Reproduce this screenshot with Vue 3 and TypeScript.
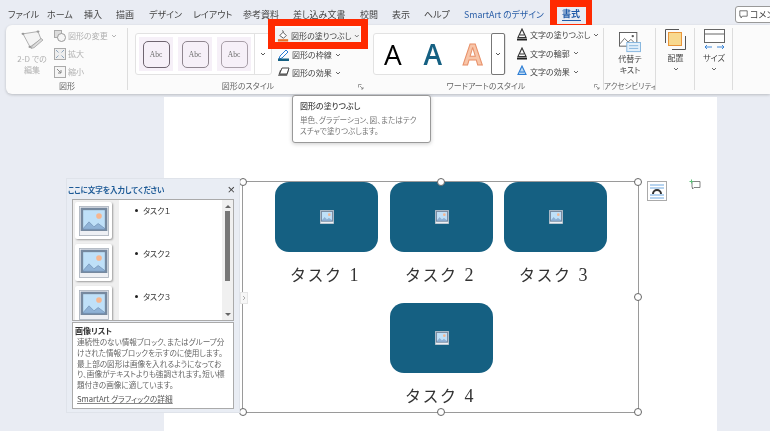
<script setup lang="ts">
const tabs = [
  { t: 'ファイル', w: 39 }, { t: 'ホーム', w: 37 }, { t: '挿入', w: 32 }, { t: '描画', w: 33 },
  { t: 'デザイン', w: 44 }, { t: 'レイアウト', w: 50 }, { t: '参考資料', w: 50 }, { t: '差し込み文書', w: 67 },
  { t: '校閲', w: 32 }, { t: '表示', w: 32 }, { t: 'ヘルプ', w: 40 }
]
const abc = ['#6f6570', '#8f868f', '#a89fa8']
const wordArt = [
  { c: 'wa-black' }, { c: 'wa-blue' }, { c: 'wa-orange' }
]
const fxText = ['文字の塗りつぶし', '文字の輪郭', '文字の効果']
const nodes = [
  { x: 32, y: 0, label: 'タスク', n: '1' },
  { x: 147, y: 0, label: 'タスク', n: '2' },
  { x: 261, y: 0, label: 'タスク', n: '3' },
  { x: 147, y: 121, label: 'タスク', n: '4' }
]
const handles = [
  [0, 0], [198, 0], [395, 0], [0, 115], [395, 115], [0, 230], [198, 230], [395, 230]
]
const paneItems = ['タスク１', 'タスク２', 'タスク３']
</script>

<template>
  <div class="screen">
    <svg class="defs" width="0" height="0">
      <symbol id="pic" viewBox="0 0 36 36">
        <rect x="0.5" y="0.5" width="35" height="35" fill="#eef0f4" stroke="#a9b2bd" />
        <rect x="3.5" y="3.5" width="29" height="25" fill="#bfe0f8" stroke="#76899f" stroke-width="3" />
        <circle cx="24" cy="12" r="3.4" fill="#f6b68f" />
        <path d="M5 27l7-8 6 6 5-4 8 6v1H5z" fill="#8fb2d6" stroke="#6f8fb3" stroke-width=".8" />
      </symbol>
      <symbol id="chev" viewBox="0 0 6 4">
        <path d="M1 1l2 2 2-2" fill="none" stroke="currentColor" stroke-width=".9" />
      </symbol>
    </svg>

    <header class="tabbar">
      <span v-for="tab in tabs" :key="tab.t" class="tab" :style="{ width: tab.w + 'px' }">{{ tab.t }}</span>
      <span class="tab tab-sa">SmartArt のデザイン</span>
      <span class="tab tab-fmt"><b>書式</b></span>
      <span class="comment">
        <svg width="9" height="9" viewBox="0 0 9 9"><path d="M.8.8h7.4v5.4H3.4L2 8V6.2H.8z" fill="none" stroke="#555" stroke-width=".8" /></svg>
        コメント
      </span>
    </header>

    <section class="ribbon">
      <div class="group g1">
        <div class="g-body g1-body">
          <div class="big disabled">
            <svg width="24" height="20" viewBox="0 0 24 26" preserveAspectRatio="none">
              <path d="M3 5l15-3 3 10-11 10z" fill="#f4f4f4" stroke="#a8a8a8" stroke-width="1" />
              <circle cx="3" cy="5" r="1.5" fill="#999" /><circle cx="18" cy="2" r="1.5" fill="#999" /><circle cx="10" cy="22" r="1.5" fill="#999" />
              <path d="M12 21l9-10 2 2-9 10-3 1z" fill="#ddd" stroke="#999" stroke-width=".8" />
            </svg>
            <span>2-D での<br />編集</span>
          </div>
          <div class="small-col disabled">
            <div class="row">
              <svg width="12" height="12" viewBox="0 0 12 12"><rect x=".5" y=".5" width="7" height="7" fill="#ddd" stroke="#aaa" /><circle cx="7.5" cy="7.5" r="4" fill="#f5f5f5" stroke="#999" /></svg>
              図形の変更 <svg class="chev" width="6" height="4"><use href="#chev" /></svg>
            </div>
            <div class="row">
              <svg width="12" height="12" viewBox="0 0 12 12"><rect x=".5" y=".5" width="11" height="11" fill="#eee" stroke="#aaa" /><path d="M2 2l2.5 2.5M10 2L7.5 4.500M2 10l2.500-2.500M10 10L7.500 7.500" stroke="#8ca5bd" /></svg>
              拡大
            </div>
            <div class="row">
              <svg width="12" height="12" viewBox="0 0 12 12"><rect x=".5" y=".5" width="11" height="11" fill="#f5f5f5" stroke="#aaa" /><path d="M3 3l4 4M7 4v3H4" fill="none" stroke="#888" /></svg>
              縮小
            </div>
          </div>
        </div>
        <div class="g-label">図形</div>
      </div>

      <div class="group g2">
        <div class="g-body g2-body">
          <div class="gallery gal-shape">
            <div v-for="c in abc" :key="c" class="abc-cell">
              <span class="abc" :style="{ borderColor: c }">Abc</span>
            </div>
            <div class="more"><span class="more-bar"></span><svg width="6" height="4"><use href="#chev" /></svg></div>
          </div>
          <div class="fmt-col">
            <div class="row fill-btn">
              <svg width="13" height="13" viewBox="0 0 13 13"><path d="M3 6.500l3.500-3.500 3.500 3.500-3 3z" fill="#fff" stroke="#444" stroke-width=".9" /><path d="M6 1l1 2" stroke="#444" /><rect x="1" y="10.500" width="11" height="2.500" fill="#e5702a" /></svg>
              図形の塗りつぶし <svg class="chev" width="6" height="4"><use href="#chev" /></svg>
            </div>
            <div class="row">
              <svg width="13" height="13" viewBox="0 0 13 13"><path d="M3 8l6-6 2 2-6 6-3 1z" fill="#fff" stroke="#2b7cd3" /><rect x="1" y="10.500" width="11" height="2.500" fill="#156082" /></svg>
              図形の枠線 <svg class="chev" width="6" height="4"><use href="#chev" /></svg>
            </div>
            <div class="row">
              <svg width="13" height="13" viewBox="0 0 13 13"><path d="M1 10l2-6h9l-2 6z" fill="#777" /><path d="M2.500 8l2.500-6h7l-2 6z" fill="#fff" stroke="#444" /></svg>
              図形の効果 <svg class="chev" width="6" height="4"><use href="#chev" /></svg>
            </div>
          </div>
        </div>
        <div class="g-label">図形のスタイル</div>
        <svg class="launcher" width="6" height="6" viewBox="0 0 6 6"><path d="M.5.5h3M.5.500v3M2 2l3 3M5 3v2H3" fill="none" stroke="#777" stroke-width=".7" /></svg>
      </div>

      <div class="group g3">
        <div class="g-body g3-body">
          <div class="gallery gal-wa">
            <span v-for="w in wordArt" :key="w.c" class="wa" :class="w.c">A</span>
            <div class="more more-wa"><svg width="6" height="4"><use href="#chev" /></svg></div>
          </div>
          <div class="fmt-col fx-col">
            <div v-for="(f, i) in fxText" :key="f" class="row">
              <svg width="12" height="13" viewBox="0 0 12 13">
                <path d="M6 1L2 9.500h8zM4 7h4" :fill="i === 2 ? '#bcd8f2' : 'none'" :stroke="i === 2 ? '#2b7cd3' : '#333'" stroke-width="1.100" />
                <rect v-if="i < 2" x="1" y="10.500" width="10" height="2" fill="#222" />
              </svg>
              {{ f }} <svg class="chev" width="6" height="4"><use href="#chev" /></svg>
            </div>
          </div>
        </div>
        <div class="g-label">ワードアートのスタイル</div>
        <svg class="launcher" width="6" height="6" viewBox="0 0 6 6"><path d="M.5.5h3M.5.500v3M2 2l3 3M5 3v2H3" fill="none" stroke="#777" stroke-width=".7" /></svg>
      </div>

      <div class="group g4">
        <div class="g-body col-body">
          <svg width="22" height="21" viewBox="0 0 24 23">
            <rect x=".5" y=".5" width="19" height="15" fill="#fff" stroke="#555" />
            <path d="M1 13l5-6 4 4 3-3 6 6" fill="none" stroke="#666" />
            <circle cx="15" cy="4.500" r="1.300" fill="#555" />
            <rect x="8.500" y="11.500" width="15" height="10" fill="#e3f0fb" stroke="#7fb2dc" />
            <path d="M11 15h10M11 18h10" stroke="#7fb2dc" />
          </svg>
          <span class="big-text">代替テ<br />キスト</span>
        </div>
        <div class="g-label tight">アクセシビリティ</div>
      </div>

      <div class="group g5">
        <div class="g-body col-body arrange">
          <svg width="21" height="21" viewBox="0 0 21 21">
            <path d="M.5 14V.5H14M7 20.500h13.500V7" fill="none" stroke="#555" />
            <rect x="3.500" y="3.500" width="13" height="13" fill="#f8d98f" stroke="#e9953a" />
          </svg>
          <span class="big-text">配置</span>
          <svg class="chev-big" width="6" height="4"><use href="#chev" /></svg>
        </div>
      </div>

      <div class="group g6">
        <div class="g-body col-body arrange">
          <svg width="21" height="21" viewBox="0 0 21 21">
            <rect x=".5" y=".5" width="20" height="13" fill="#fff" stroke="#666" />
            <path d="M.5 5h20" stroke="#666" />
            <path d="M1 18h7M13 18h7M3 16l-2 2 2 2M18 16l2 2-2 2" fill="none" stroke="#2b7cd3" stroke-width=".9" />
          </svg>
          <span class="big-text">サイズ</span>
          <svg class="chev-big" width="6" height="4"><use href="#chev" /></svg>
        </div>
      </div>
    </section>

    <main class="page-wrap">
      <div class="page">
        <div class="smartart">
          <div v-for="node in nodes" :key="node.n" class="node" :style="{ left: node.x + 'px', top: node.y + 'px' }">
            <div class="node-shape"><svg width="14" height="14"><use href="#pic" /></svg></div>
            <div class="node-label">{{ node.label }} <span>{{ node.n }}</span></div>
          </div>
          <span v-for="h in handles" :key="h.join()" class="handle" :style="{ left: h[0] + 'px', top: h[1] + 'px' }"></span>
        </div>
      </div>
    </main>

    <aside class="pane">
      <div class="pane-title"><span>ここに文字を入力してください</span><i>×</i></div>
      <div class="pane-list">
        <div class="thumbs">
          <div v-for="p in paneItems" :key="p" class="thumb"><svg width="30" height="30"><use href="#pic" /></svg></div>
        </div>
        <ul class="items"><li v-for="p in paneItems" :key="p">{{ p }}</li></ul>
        <div class="scroll">
          <span class="up"></span><span class="bar"></span><span class="down"></span>
        </div>
      </div>
      <div class="pane-desc">
        <b>画像リスト</b>
        <p>連続性のない情報ブロック、またはグループ分<br />けされた情報ブロックを示すのに使用します。<br />最上部の図形は画像を入れるようになってお<br />り、画像がテキストよりも強調されます。短い標<br />題付きの画像に適しています。</p>
        <a>SmartArt グラフィックの詳細</a>
      </div>
    </aside>
    <span class="pane-toggle"><svg width="4" height="6" viewBox="0 0 4 6"><path d="M1 1l2 2-2 2" fill="none" stroke="#999" stroke-width=".8" /></svg></span>

    <div class="layout-btn">
      <svg width="18" height="18" viewBox="0 0 18 18">
        <path d="M2 3h14M2 6h14M2 13h14M2 16h14" stroke="#6fa8e0" />
        <path d="M5 12a4 4 0 0 1 8 0" fill="none" stroke="#333" stroke-width="2" />
      </svg>
    </div>
    <svg class="comment-add" width="12" height="12" viewBox="0 0 12 12">
      <path d="M3 2.500h8v6H5L3.500 10V8.500H3z" fill="#fff" stroke="#666" stroke-width=".8" />
      <path d="M2.500 .5v4M.5 2.500h4" stroke="#5fbf7a" />
    </svg>

    <div class="tooltip">
      <b>図形の塗りつぶし</b>
      <p>単色、グラデーション、図、またはテク<br />スチャで塗りつぶします。</p>
    </div>

    <div class="mark mark-fill"></div>
    <div class="mark mark-tab"></div>
  </div>
</template>

<style>
html, body { margin: 0; background: #e9ecf3; }
</style>

<style scoped>
.screen {
  position: relative;
  width: 770px;
  height: 431px;
  overflow: hidden;
  background: #e9ecf3;
  font-family: "Noto Sans CJK JP", "Noto Sans", sans-serif;
  font-feature-settings: "palt";
  color: #444;
  font-size: 8px;
  filter: blur(0.3px);
}
.defs { position: absolute; }
.tabbar { height: 25px; display: flex; align-items: center; padding-left: 8px; padding-top: 4px; box-sizing: border-box; font-size: 9px; }
.tab { white-space: nowrap; flex: none; }
.tab-sa { color: #2b5fa8; width: 98px; font-size: 8.800px; }
.tab-fmt { color: #1f5aa8; width: 19px; position: relative; }
.tab-fmt b { border-bottom: 1.5px solid #1f5aa8; display: block; line-height: 12px; font-weight: 700; }
.comment { position: absolute; left: 735px; top: 6px; width: 48px; height: 17px; border: 1px solid #999; border-radius: 3px; background: #fff; display: flex; align-items: center; gap: 2px; padding-left: 3px; box-sizing: border-box; white-space: nowrap; }
.ribbon { margin-left: 6px; height: 69px; display: flex; background: #fbfbfb; border-radius: 6px 0 0 6px; box-shadow: 0 1px 3px rgba(0, 0, 0, .2); }
.group { position: relative; display: flex; flex-direction: column; box-sizing: border-box; }
.g-body { height: 55px; flex: none; box-sizing: border-box; }
.g-label { text-align: center; color: #666; line-height: 12px; white-space: nowrap; }
.g-label.tight { font-size: 7.500px; }
.launcher { position: absolute; right: 4px; bottom: 4px; }
.g1 { width: 122px; }
.g1::after, .g3::after, .g4::after, .g5::after, .g6::after { content: ""; position: absolute; right: 0; top: 3px; bottom: 4px; width: 1px; background: #ddd; }
.g2 { width: 240px; }
.g3 { width: 236px; }
.g4 { width: 52px; }
.g5 { width: 39px; }
.g6 { width: 38px; }
.g1-body { display: flex; padding-left: 6px; }
.big { width: 40px; margin-right: 2px; display: flex; flex-direction: column; align-items: center; padding-top: 5px; text-align: center; line-height: 11px; }
.big span { margin-top: 3px; }
.disabled { color: #b0b0b0; }
.small-col { padding-top: 4px; display: flex; flex-direction: column; gap: 5px; }
.row { display: flex; align-items: center; gap: 2px; height: 13px; white-space: nowrap; }
.chev { color: #555; margin-left: 1px; }
.disabled .chev { color: #aaa; }
.g2-body { display: flex; padding: 8px 0 0 7px; }
.gallery { height: 42px; box-sizing: border-box; border: 1px solid #e2e2e2; border-radius: 3px; background: #fff; display: flex; align-items: center; }
.gal-shape { width: 137px; padding-left: 3px; gap: 5px; }
.abc-cell { width: 34px; height: 34px; background: #f6f0f8; display: flex; align-items: center; justify-content: center; flex: none; }
.abc { width: 27px; height: 27px; box-sizing: border-box; border: 1px solid; border-radius: 5px; font: 7.500px "Liberation Serif", serif; color: #6d6d6d; display: flex; align-items: center; justify-content: center; }
.more { margin-left: -2px; flex: 1; align-self: stretch; display: flex; align-items: center; justify-content: center; color: #444; position: relative; }
.more-bar { position: absolute; left: 0; top: 0; bottom: 0; width: 1px; background: #e2e2e2; }
.fmt-col { margin-left: 3px; margin-top: -7px; display: flex; flex-direction: column; gap: 5px; padding-left: 2px; }
.fill-btn { background: #f3f3f3; width: 85px; height: 15px; margin-left: -2px; padding-left: 2px; margin-top: 2px; box-sizing: border-box; }
.g3-body { display: flex; padding: 8px 0 0 5px; }
.gal-wa { width: 133px; position: relative; padding-left: 10px; gap: 22.500px; }
.wa { font: 700 28px "Open Sans", "Noto Sans", sans-serif; line-height: 30px; width: 17px; text-align: center; }
.wa-black { color: #000; font-weight: 400; }
.wa-blue { color: #156082; font-weight: 600; }
.wa-orange { color: #f8c5a8; -webkit-text-stroke: 1px #e8916a; font-weight: 700; }
.more-wa { position: absolute; right: 0; top: -1px; bottom: -1px; width: 14px; border: 1px solid #777; border-radius: 2px; box-sizing: border-box; margin: 0; }
.fx-col { margin-left: 8px; margin-top: -5px; gap: 5.500px; }
.col-body { display: flex; flex-direction: column; align-items: center; padding-top: 7px; }
.big-text { line-height: 11px; text-align: center; margin-top: 0; }
.arrange { padding-top: 4px; }
.arrange .big-text { margin-top: 2px; }
.chev-big { margin-top: 4px; color: #555; }
.page-wrap { margin-top: 3px; height: 334px; padding-left: 164px; }
.page { width: 553px; height: 334px; background: #fff; padding: 84px 0 0 78px; box-sizing: border-box; }
.smartart { position: relative; width: 395px; height: 230px; border: 1px solid #9a9a9a; box-sizing: content-box; }
.node { position: absolute; width: 103px; }
.node-shape { height: 70px; background: #156082; border-radius: 14px; display: flex; align-items: center; justify-content: center; }
.node-label { margin-top: 11px; margin-left: -3px; text-align: center; font-size: 16px; font-feature-settings: normal; letter-spacing: 1.500px; word-spacing: 2px; line-height: 22px; color: #333; white-space: nowrap; }
.node-label span { font: 18px "Liberation Serif", serif; }
.handle { position: absolute; width: 8px; height: 8px; margin: -4px 0 0 -4px; background: #fff; border: 1px solid #666; border-radius: 50%; box-sizing: border-box; }
.pane { position: absolute; left: 66px; top: 178px; width: 174px; height: 235px; box-sizing: border-box; background: #e9edf4; border: 1px solid #dfe3ea; padding: 0 0 0 5px; }
.pane-title { height: 20px; display: flex; align-items: center; justify-content: space-between; margin-left: -4px; padding-right: 4px; color: #1d5a96; font-weight: 700; font-size: 7.500px; white-space: nowrap; }
.pane-title i { font: 13px "Liberation Sans", sans-serif; color: #444; }
.pane-list { height: 122px; width: 162px; box-sizing: border-box; border: 1px solid #aaa; background: #fff; display: flex; overflow: hidden; position: relative; }
.thumbs { width: 46px; background: #efefef; padding: 2px 0 0 2px; box-sizing: border-box; flex: none; }
.thumb { width: 37px; height: 37px; background: #fff; border-radius: 2px; box-shadow: 1px 1px 2px rgba(0, 0, 0, .35); display: flex; align-items: center; justify-content: center; margin-bottom: 5px; }
.items { list-style: none; margin: 0; padding: 5px 0 0 24px; flex: 1; }
.items li { position: relative; height: 43px; line-height: 11px; color: #333; white-space: nowrap; }
.items li::before { content: ""; position: absolute; left: -8px; top: 4px; width: 3px; height: 3px; border-radius: 50%; background: #222; }
.scroll { width: 11px; background: #f0f0f0; display: flex; flex-direction: column; align-items: center; padding-top: 5px; box-sizing: border-box; flex: none; }
.up { border: 3px solid transparent; border-bottom: 3.500px solid #666; border-top: 0; }
.bar { width: 5px; height: 70px; background: #777; margin: 3px 0; }
.down { position: absolute; bottom: 4px; border: 3px solid transparent; border-top: 3.500px solid #666; border-bottom: 0; }
.pane-desc { margin-top: 1px; height: 87px; width: 162px; box-sizing: border-box; border: 1px solid #aaa; background: #fff; padding: 2px 2px 0 2px; }
.pane-desc b { display: block; color: #333; line-height: 12px; }
.pane-desc p { margin: 0; padding-left: 2px; font-size: 7.600px; line-height: 10.800px; color: #666; white-space: nowrap; }
.pane-desc a { display: block; margin: 2px 0 0 2px; color: #555; font-size: 7.700px; line-height: 12px; text-decoration: underline; text-decoration-color: #888; white-space: nowrap; }
.pane-toggle { position: absolute; left: 240px; top: 292px; width: 8px; height: 12px; background: #f7f7f7; border: 1px solid #e6e6e6; box-sizing: border-box; display: flex; align-items: center; justify-content: center; }
.layout-btn { position: absolute; left: 647px; top: 181px; width: 20px; height: 20px; box-sizing: border-box; border: 1px solid #aaa; background: #fff; display: flex; align-items: center; justify-content: center; }
.comment-add { position: absolute; left: 689px; top: 179px; }
.tooltip { position: absolute; left: 292px; top: 95px; width: 139px; height: 48px; box-sizing: border-box; background: #fff; border: 1px solid #999; border-radius: 3px; box-shadow: 0 1px 4px rgba(0, 0, 0, .2); padding: 4px 7px; }
.tooltip b { display: block; font-weight: 500; color: #444; line-height: 12px; }
.tooltip p { margin: 2px 0 0; font-size: 7.600px; color: #777; line-height: 11px; white-space: nowrap; }
.mark { position: absolute; box-sizing: border-box; border: 7px solid #ff2a00; }
.mark-fill { left: 268px; top: 19px; width: 100px; height: 30px; }
.mark-tab { left: 550px; top: 0; width: 42px; height: 25px; border-top-width: 7px; border-bottom-width: 1px; border-left-width: 7px; border-right-width: 6px; }
</style>
